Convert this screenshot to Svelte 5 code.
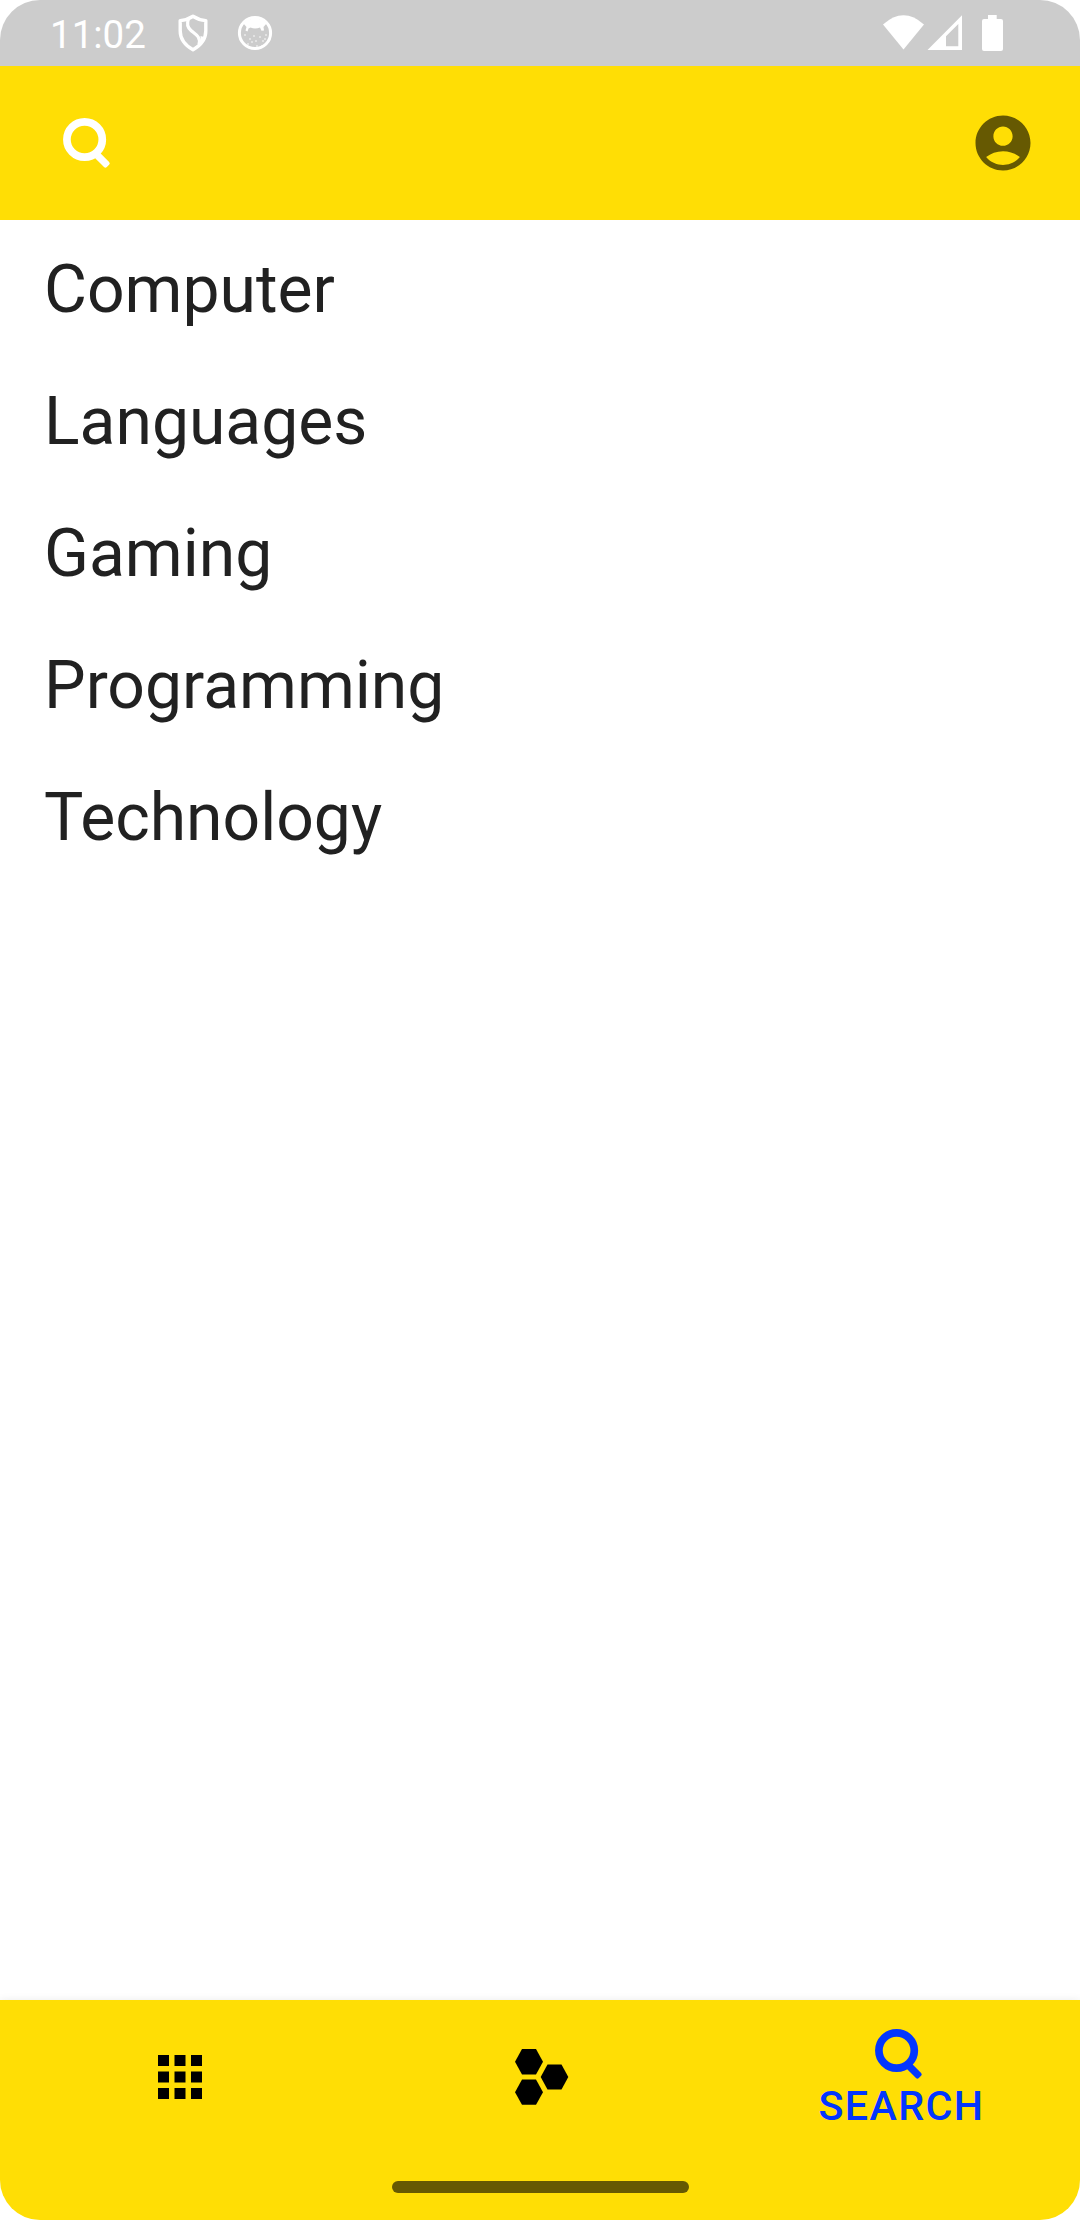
<script>
  const topics = ['Computer', 'Languages', 'Gaming', 'Programming', 'Technology'];
  const cells = [0, 16.5, 33];
  const craters = [
    [8, 20], [13, 24], [11, 29], [17, 21], [19, 26], [23, 22], [26, 26], [29, 20],
    [20, 31], [25, 31], [15, 27], [28, 24]
  ];
</script>

{#snippet magnifier()}
  <svg class="magnifier" width="66" height="66" viewBox="0 0 66 66">
    <circle cx="29.6" cy="29.5" r="17.7" fill="none" stroke="currentColor" stroke-width="7.7" />
    <path
      d="M45.2 43 L54.1 51.9 Q55.5 53.3 54.1 54.7 L51.8 57 Q50.4 58.4 49 57 L40.2 48.2 Z"
      fill="currentColor"
    />
  </svg>
{/snippet}

<div class="screen">
  <header class="status">
    <span class="time">11:02</span>
    <svg class="shield" width="32" height="40" viewBox="0 0 32 40" fill="none" stroke="#fff" stroke-linejoin="round">
      <path d="M16 3.2 C12 5.8 7.5 7.2 3.2 7.6 V18 C3.2 26 8.5 32.5 16 36.8 C23.5 32.5 28.8 26 28.8 18 V7.6 C24.5 7.2 20 5.8 16 3.2 Z" stroke-width="3.4" />
      <path d="M11.5 6 C9.5 11 10.5 14.5 14 17.5 C19 21.5 24 24 22 31.5" stroke-width="3.2" />
      <path d="M18 34 C22 31 24 28 23.5 23 L27 24 C25 29 22 33 18 35 Z" fill="#fff" stroke="none" />
    </svg>
    <svg class="cookie" width="36" height="36" viewBox="0 0 36 36" fill="#fff">
      <circle cx="18" cy="18" r="15.6" fill="none" stroke="#fff" stroke-width="3" />
      <path d="M6 8 Q18 -1 30 8 L26.5 12 L27 15.5 L24.5 15.8 L23 12.5 Q18 14.5 13.5 12.5 L11.5 13.5 L10.5 16.5 L8.5 15.5 L9.5 12 Z" />
      {#each craters as [x, y]}
        <circle cx={x} cy={y} r="0.8" />
      {/each}
    </svg>
    <svg class="signals" width="122" height="38" viewBox="883 14 122 38" fill="#fff">
      <path d="M883 24.5 Q903.5 6 924 24.5 L903.5 49.5 Z" />
      <path fill-rule="evenodd" d="M927.5 50 L962 15.2 V50 Z M946 36.2 V46.2 H958.3 V24 Z" />
      <path d="M988 15 H996.7 V19 H1001 Q1003 19 1003 21 V48.9 Q1003 50.9 1001 50.9 H984 Q982 50.9 982 48.9 V21 Q982 19 984 19 H988 Z" />
    </svg>
  </header>

  <div class="appbar">
    {@render magnifier()}
    <svg width="66" height="66" viewBox="0 0 24 24" fill="#665902">
      <path
        d="M12 2C6.48 2 2 6.48 2 12s4.48 10 10 10 10-4.48 10-10S17.52 2 12 2zM12 6c1.93 0 3.5 1.57 3.5 3.5S13.93 13 12 13s-3.5-1.57-3.5-3.5S10.07 6 12 6zM12 20c-2.03 0-4.43-.82-6.14-2.88C7.55 15.8 9.68 15 12 15s4.45.8 6.14 2.12C16.43 19.18 14.03 20 12 20z"
      />
    </svg>
  </div>

  <ul class="topics">
    {#each topics as topic}
      <li>{topic}</li>
    {/each}
  </ul>

  <footer class="bottom">
    <nav>
      <div class="tab">
        <svg width="44" height="44" viewBox="0 0 44 44">
          {#each cells as y}
            {#each cells as x}
              <rect {x} {y} width="11" height="11" />
            {/each}
          {/each}
        </svg>
      </div>
      <div class="tab">
        <svg width="66" height="66" viewBox="507 2044 66 66">
          <path d="M515 2061.7 L522 2049.1 H536 L543 2061.7 L536 2074.4 H522 Z" />
          <path d="M515 2092.2 L522 2079.5 H536 L543 2092.2 L536 2104.8 H522 Z" />
          <path d="M540.7 2077 L547.5 2064.5 H561.5 L568.3 2077 L561.5 2089.6 H547.5 Z" />
        </svg>
      </div>
      <div class="tab active">
        {@render magnifier()}
        <span>SEARCH</span>
      </div>
    </nav>
    <div class="handle"></div>
  </footer>
</div>

<style>
  :global(body) {
    margin: 0;
    background: #fff;
  }
  .screen {
    width: 1080px;
    height: 2220px;
    display: flex;
    flex-direction: column;
    overflow: hidden;
    border-radius: 40px;
    background: #fff;
    font-family: Roboto, sans-serif;
  }
  svg {
    display: block;
    flex: none;
  }
  .status {
    height: 66px;
    flex: none;
    box-sizing: border-box;
    display: flex;
    align-items: center;
    padding: 0 75px 0 50px;
    background: #ccc;
    color: #fff;
  }
  .time {
    width: 127px;
    font-size: 38.5px;
    line-height: 46px;
    padding-top: 3px;
  }
  .cookie {
    margin-left: 27.5px;
  }
  .signals {
    margin-left: auto;
  }
  .appbar {
    height: 154px;
    flex: none;
    box-sizing: border-box;
    display: flex;
    align-items: center;
    justify-content: space-between;
    padding: 0 44px 0 55px;
    background: #ffde05;
    color: #fff;
  }
  .topics {
    flex: 1;
    margin: 0;
    padding: 4px 44px 0;
    list-style: none;
  }
  .topics li {
    height: 132px;
    line-height: 132px;
    font-size: 66px;
    color: #212121;
  }
  .bottom {
    height: 220px;
    flex: none;
    display: flex;
    flex-direction: column;
    align-items: center;
    background: #ffde05;
    box-shadow: 0 0 8px rgba(0, 0, 0, 0.08);
  }
  nav {
    width: 100%;
    height: 154px;
    display: grid;
    grid-template-columns: repeat(3, 1fr);
  }
  .tab {
    display: flex;
    flex-direction: column;
    align-items: center;
    justify-content: center;
  }
  .active {
    justify-content: flex-start;
    padding-top: 21px;
    color: #0336ff;
  }
  .active span {
    font-size: 41.25px;
    font-weight: 500;
    line-height: 48px;
    letter-spacing: 1.37px;
    margin-top: -5px;
    padding-left: 3px;
  }
  .handle {
    width: 297px;
    height: 11.5px;
    margin-top: 27px;
    border-radius: 6px;
    background: #665902;
  }
</style>
